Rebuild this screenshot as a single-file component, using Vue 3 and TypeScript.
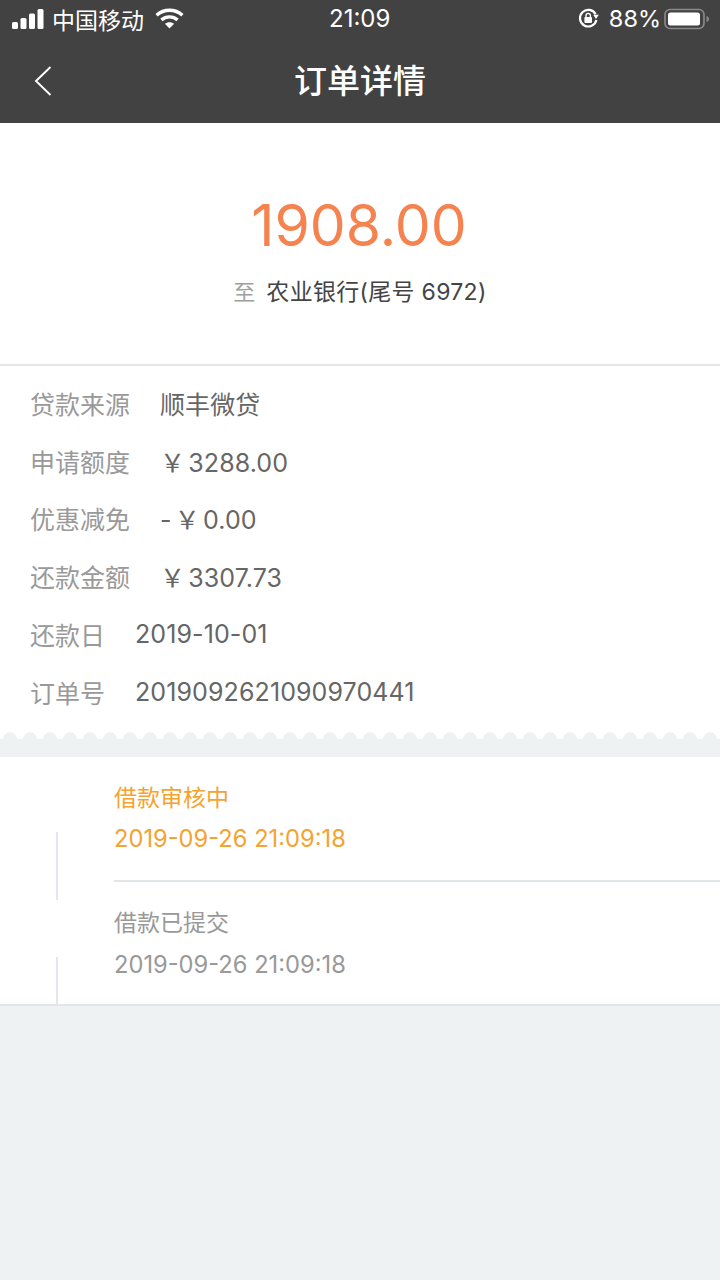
<script setup lang="ts">
const rows: { label: string; value: string }[] = [
  { label: '贷款来源', value: '顺丰微贷' },
  { label: '申请额度', value: '￥ 3288.00' },
  { label: '优惠减免', value: '- ￥ 0.00' },
  { label: '还款金额', value: '￥ 3307.73' },
  { label: '还款日', value: '2019-10-01' },
  { label: '订单号', value: '2019092621090970441' },
]
const steps = [
  { title: '借款审核中', time: '2019-09-26 21:09:18', active: true },
  { title: '借款已提交', time: '2019-09-26 21:09:18', active: false },
]
</script>

<template>
  <div class="page">
    <header class="header">
      <div class="status">
        <div class="status-left">
          <svg class="signal" width="32" height="20" viewBox="0 0 32 20" fill="#fff">
            <rect x="0" y="13" width="6" height="7" rx="1.5" />
            <rect x="8.5" y="9" width="6" height="11" rx="1.5" />
            <rect x="17" y="4.5" width="6" height="15.5" rx="1.5" />
            <rect x="25.5" y="0" width="6" height="20" rx="1.5" />
          </svg>
          <span class="carrier">中国移动</span>
          <svg class="wifi" width="29" height="21" viewBox="0 0 29 21" fill="none" stroke="#fff" stroke-width="3.4">
            <path d="M1.6 7.2C9 .6 20 .6 27.4 7.2" />
            <path d="M6.4 11.9c4.6-4 11.6-4 16.2 0" />
            <path d="M14.5 20.6l-4.6-4.9c2.6-2.1 6.6-2.1 9.2 0z" fill="#fff" stroke="none" />
          </svg>
        </div>
        <span class="clock">21:09</span>
        <div class="status-right">
          <svg class="lock" width="21" height="21" viewBox="0 0 21 21" fill="none">
            <path d="M17.6 6.2A8.3 8.3 0 1 0 18.4 12" stroke="#fff" stroke-width="2.2" />
            <path d="M15.2 6.8l5.6 0-2.8 4.2z" fill="#fff" />
            <rect x="6.4" y="9" width="7.6" height="6" rx="1" fill="#fff" />
            <path d="M8 9.5V7.6a2.2 2.2 0 0 1 4.4 0v1.9" stroke="#fff" stroke-width="1.4" />
          </svg>
          <span class="pct">88%</span>
          <svg class="battery" width="46" height="22" viewBox="0 0 46 22" fill="none">
            <rect x="1" y="1.5" width="39" height="19" rx="5" stroke="#8a8a8a" stroke-width="1.6" />
            <rect x="4" y="4.5" width="32" height="13" rx="2.5" fill="#fff" />
            <path d="M42.5 8c1.8.5 2.5 1.6 2.5 3s-.7 2.500-2.500 3z" fill="#8a8a8a" />
          </svg>
        </div>
      </div>
      <nav class="nav">
        <svg class="back" width="20" height="32" viewBox="0 0 20 32" fill="none" stroke="#fff" stroke-width="1.900">
          <path d="M17.500 2L3 16l14.500 14" />
        </svg>
        <h1 class="title">订单详情</h1>
      </nav>
    </header>

    <section class="summary">
      <div class="amount">1908.00</div>
      <div class="target">
        <span class="to">至</span>
        <span class="bank">农业银行(尾号 6972)</span>
      </div>
    </section>

    <section class="details">
      <div v-for="row in rows" :key="row.label" class="row">
        <span class="label">{{ row.label }}</span>
        <span class="value">{{ row.value }}</span>
      </div>
    </section>

    <div class="scallop"></div>

    <section class="timeline">
      <div v-for="(step, i) in steps" :key="i" class="step" :class="{ active: step.active, last: i === steps.length - 1 }">
        <span class="line"></span>
        <div class="step-body">
          <div class="step-title">{{ step.title }}</div>
          <div class="step-time">{{ step.time }}</div>
        </div>
      </div>
    </section>
  </div>
</template>

<style>
html,
body {
  margin: 0;
  background: #eff2f3;
}
</style>

<style scoped>
.page {
  width: 720px;
  min-height: 1280px;
  background: #eff2f3;
  font-family: Inter, "Noto Sans CJK SC", sans-serif;
  overflow: hidden;
}
.header {
  background: #424242;
  color: #fff;
  height: 123px;
}
.status {
  height: 40px;
  box-sizing: border-box;
  display: flex;
  align-items: center;
  justify-content: space-between;
  padding: 0 10px 3px 12px;
  position: relative;
  font-size: 23px;
}
.status-left,
.status-right {
  display: flex;
  align-items: center;
}
.signal {
  margin-right: 8px;
}
.carrier {
  width: 92px;
  font-family: "Noto Sans CJK SC", sans-serif;
}
.wifi {
  margin-left: 11px;
}
.clock {
  position: absolute;
  left: 329px;
  top: 4px;
  font-size: 24px;
  line-height: 30px;
}
.pct {
  margin: 0 3px 0 10px;
  font-size: 23.500px;
}
.nav {
  height: 83px;
  display: flex;
  align-items: center;
  justify-content: center;
  position: relative;
}
.back {
  position: absolute;
  left: 33px;
  top: 25px;
}
.title {
  margin: -6px 0 0;
  font-size: 33px;
  font-weight: 500;
  font-family: "Noto Sans CJK SC", sans-serif;
}
.summary {
  background: #fff;
  height: 243px;
  box-sizing: border-box;
  padding-top: 70px;
  border-bottom: 2px solid #e6e6e6;
  text-align: center;
}
.amount {
  color: #f58350;
  font-size: 57px;
  line-height: 66px;
  font-weight: 400;
  margin-right: 2px;
}
.target {
  display: flex;
  justify-content: center;
  align-items: center;
  gap: 11px;
  margin-top: 17px;
  line-height: 32px;
}
.to {
  color: #a0a0a0;
  font-size: 22px;
}
.bank {
  color: #444;
  font-size: 23px;
  letter-spacing: 0.3px;
}
.details {
  background: #fff;
  padding: 8px 30px 0;
  height: 366px;
  box-sizing: border-box;
}
.row {
  display: flex;
  align-items: center;
  gap: 30px;
  height: 57.800px;
  font-size: 25px;
}
.label {
  color: #999;
}
.value {
  color: #666;
  word-spacing: -4px;
  letter-spacing: 0.1px;
}
.scallop {
  height: 25px;
  background-color: #eff2f3;
  background-image: radial-gradient(circle at 10px 7px, #eff2f3 6.500px, #fff 7px);
  background-size: 20px 7px;
  background-repeat: repeat-x;
}
.timeline {
  background: #fff;
  border-bottom: 2px solid #e3e6e8;
}
.step {
  position: relative;
  height: 124.500px;
  padding-left: 114px;
  box-sizing: border-box;
  color: #999;
}
.step.active {
  color: #f5a32f;
}
.step.last {
  height: 122.500px;
}
.step.active .step-body {
  border-bottom: 2px solid #e3e6e8;
}
.step-body {
  height: 100%;
  box-sizing: border-box;
  padding-top: 23px;
}
.step-title {
  font-size: 23px;
  line-height: 36px;
}
.step-time {
  font-size: 23.700px;
  line-height: 36px;
  margin-top: 5px;
}
.step.last .step-time {
  margin-top: 6px;
}
.line {
  position: absolute;
  left: 55.500px;
  top: 75px;
  height: 68px;
  width: 2px;
  background: #e3e6ea;
}
.step.last .line {
  height: 48px;
}
</style>
